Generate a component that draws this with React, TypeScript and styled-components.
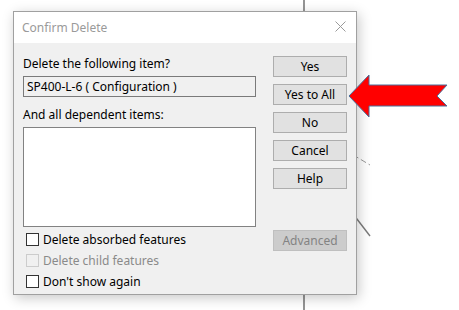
import React from "react";
import styled, { createGlobalStyle } from "styled-components";

const Global = createGlobalStyle`
  html, body { margin: 0; padding: 0; background: #ffffff; }
  body { font-family: "Noto Sans", "Open Sans", sans-serif; }
`;

const Page = styled.div`
  position: relative;
  width: 459px;
  height: 310px;
  overflow: hidden;
  padding: 11px 0 0 13px;
  box-sizing: border-box;
  background: #ffffff;
`;

const Backdrop = styled.svg`
  position: absolute;
  left: 0;
  top: 0;
  width: 459px;
  height: 310px;
`;

const Overlay = styled.svg`
  position: absolute;
  left: 0;
  top: 0;
  width: 459px;
  height: 310px;
  pointer-events: none;
`;

const Dialog = styled.div`
  position: relative;
  width: 344px;
  height: 284px;
  box-sizing: border-box;
  border: 1px solid #a0a0a0;
  background: #f0f0f0;
  box-shadow: 2px 3px 12px rgba(0, 0, 0, 0.22);
  display: flex;
  flex-direction: column;
  font-size: 12px;
  color: #000;
`;

const TitleBar = styled.div`
  height: 31px;
  background: #ffffff;
  display: flex;
  align-items: center;
  justify-content: space-between;
  padding: 0 9px 0 8px;
  box-sizing: border-box;
`;

const Title = styled.span`
  font-size: 12px;
  color: #9a9a9a;
  margin-top: -1px;
`;

const CloseIcon = styled.svg`
  width: 11px;
  height: 11px;
  margin-right: 1px;
  margin-top: -2px;
`;

const Body = styled.div`
  flex: 1;
  display: flex;
  gap: 17px;
  padding: 13px 9px 0 9px;
`;

const LeftCol = styled.div`
  width: 233px;
  display: flex;
  flex-direction: column;
`;

const Label = styled.div<{ $mt?: number }>`
  line-height: 16px;
  margin-top: ${(p) => p.$mt ?? 0}px;
  white-space: nowrap;
`;

const Field = styled.div`
  height: 21px;
  box-sizing: border-box;
  border: 1px solid #7a7a7a;
  background: #f0f0f0;
  padding: 0 3px;
  line-height: 19px;
  margin-top: 4px;
  white-space: nowrap;
`;

const ListBox = styled.div`
  height: 100px;
  box-sizing: border-box;
  border: 1px solid #828282;
  background: #ffffff;
  margin-top: 4px;
`;

const Checks = styled.div`
  display: flex;
  flex-direction: column;
  gap: 8px;
  margin-top: 6px;
  padding-left: 3px;
`;

const CheckRow = styled.label<{ $disabled?: boolean }>`
  display: flex;
  align-items: center;
  gap: 4px;
  height: 13px;
  line-height: 13px;
  color: ${(p) => (p.$disabled ? "#8a8a8a" : "#000")};
`;

const Box = styled.span<{ $disabled?: boolean }>`
  width: 13px;
  height: 13px;
  box-sizing: border-box;
  border: 1px solid ${(p) => (p.$disabled ? "#cccccc" : "#333333")};
  background: ${(p) => (p.$disabled ? "#f0f0f0" : "#ffffff")};
  flex: none;
`;

const RightCol = styled.div`
  width: 74px;
  display: flex;
  flex-direction: column;
  gap: 7px;
`;

const Button = styled.div<{ $disabled?: boolean; $mt?: number }>`
  height: 21px;
  box-sizing: border-box;
  border: 1px solid ${(p) => (p.$disabled ? "#bfbfbf" : "#adadad")};
  background: ${(p) => (p.$disabled ? "#cccccc" : "#e1e1e1")};
  color: ${(p) => (p.$disabled ? "#838383" : "#000")};
  display: flex;
  align-items: center;
  justify-content: center;
  line-height: 19px;
  margin-top: ${(p) => p.$mt ?? 0}px;
`;

export default function App() {
  return (
    <>
      <Global />
      <Page>
        <Backdrop viewBox="0 0 459 310">
          <line x1="304" y1="0" x2="304" y2="310" stroke="#7a7a7a" strokeWidth="1.6" />
          <line x1="330" y1="141" x2="370" y2="165" stroke="#9a9a9a" strokeWidth="1" strokeDasharray="6 3" />
          <line x1="330" y1="184" x2="370" y2="236" stroke="#7a7a7a" strokeWidth="1.4" />
        </Backdrop>
        <Dialog>
          <TitleBar>
            <Title>Confirm Delete</Title>
            <CloseIcon viewBox="0 0 11 11">
              <path d="M0.5 0.5 L10.5 10.5 M10.5 0.5 L0.5 10.5" stroke="#9a9a9a" strokeWidth="1" fill="none" />
            </CloseIcon>
          </TitleBar>
          <Body>
            <LeftCol>
              <Label>Delete the following item?</Label>
              <Field>SP400-L-6 ( Configuration )</Field>
              <Label $mt={10}>And all dependent items:</Label>
              <ListBox />
              <Checks>
                <CheckRow>
                  <Box />
                  Delete absorbed features
                </CheckRow>
                <CheckRow $disabled>
                  <Box $disabled />
                  Delete child features
                </CheckRow>
                <CheckRow>
                  <Box />
                  Don't show again
                </CheckRow>
              </Checks>
            </LeftCol>
            <RightCol>
              <Button>Yes</Button>
              <Button>Yes to All</Button>
              <Button>No</Button>
              <Button>Cancel</Button>
              <Button>Help</Button>
              <Button $disabled $mt={34}>Advanced</Button>
            </RightCol>
          </Body>
        </Dialog>
        <Overlay viewBox="0 0 459 310">
          <polygon
            points="349,96 369,75 369,85 447,85 437,96 447,106 369,106 369,117"
            fill="#ff0000"
            stroke="#4a6f9a"
            strokeWidth="1"
            strokeLinejoin="miter"
          />
        </Overlay>
      </Page>
    </>
  );
}
